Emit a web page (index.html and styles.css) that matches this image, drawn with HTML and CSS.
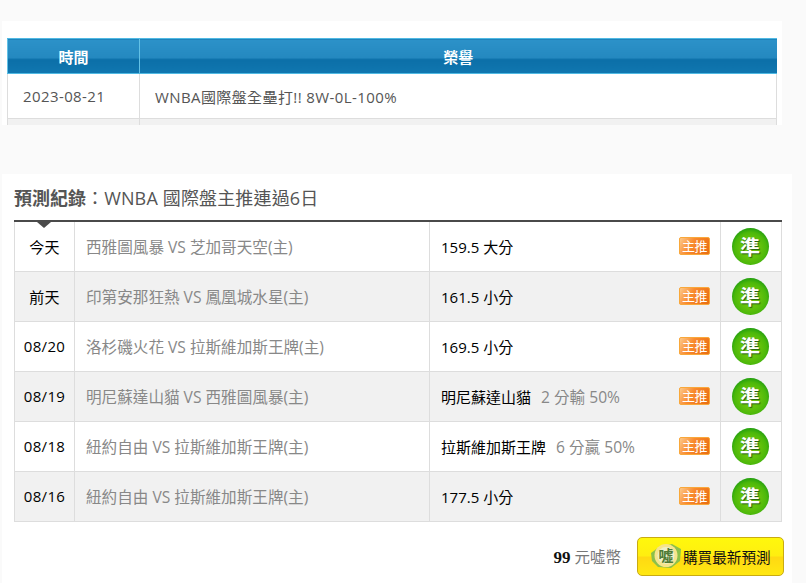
FILE: index.html
```html
<!DOCTYPE html>
<html lang="zh-Hant">
<head>
<meta charset="utf-8">
<title>預測紀錄</title>
<link rel="stylesheet" href="styles.css">
</head>
<body>
<section class="honor-card">
  <table class="honor-table">
    <thead>
      <tr><th class="honor-date">時間</th><th>榮譽</th></tr>
    </thead>
    <tbody>
      <tr><td>2023-08-21</td><td class="honor-text">WNBA國際盤全壘打!! 8W-0L-100%</td></tr>
      <tr class="alt"><td></td><td></td></tr>
    </tbody>
  </table>
</section>
<section class="record-card">
  <h2 class="record-title"><b>預測紀錄</b>：WNBA 國際盤主推連過6日</h2>
  <table class="record-table">
    <tbody>
      <tr><td class="c-day first">今天</td><td class="c-game">西雅圖風暴 VS 芝加哥天空(主)</td><td class="c-pick"><div class="pick-row"><span class="pick"><b>159.5 大分</b></span><span class="tag">主推</span></div></td><td class="c-res"><span class="hit">準</span></td></tr>
      <tr class="alt"><td class="c-day">前天</td><td class="c-game">印第安那狂熱 VS 鳳凰城水星(主)</td><td class="c-pick"><div class="pick-row"><span class="pick"><b>161.5 小分</b></span><span class="tag">主推</span></div></td><td class="c-res"><span class="hit">準</span></td></tr>
      <tr><td class="c-day">08/20</td><td class="c-game">洛杉磯火花 VS 拉斯維加斯王牌(主)</td><td class="c-pick"><div class="pick-row"><span class="pick"><b>169.5 小分</b></span><span class="tag">主推</span></div></td><td class="c-res"><span class="hit">準</span></td></tr>
      <tr class="alt"><td class="c-day">08/19</td><td class="c-game">明尼蘇達山貓 VS 西雅圖風暴(主)</td><td class="c-pick"><div class="pick-row"><span class="pick"><b>明尼蘇達山貓</b><i>2 分輸 50%</i></span><span class="tag">主推</span></div></td><td class="c-res"><span class="hit">準</span></td></tr>
      <tr><td class="c-day">08/18</td><td class="c-game">紐約自由 VS 拉斯維加斯王牌(主)</td><td class="c-pick"><div class="pick-row"><span class="pick"><b>拉斯維加斯王牌</b><i>6 分贏 50%</i></span><span class="tag">主推</span></div></td><td class="c-res"><span class="hit">準</span></td></tr>
      <tr class="alt"><td class="c-day">08/16</td><td class="c-game">紐約自由 VS 拉斯維加斯王牌(主)</td><td class="c-pick"><div class="pick-row"><span class="pick"><b>177.5 小分</b></span><span class="tag">主推</span></div></td><td class="c-res"><span class="hit">準</span></td></tr>
    </tbody>
  </table>
  <div class="buy-row">
    <span class="price"><b>99</b> 元噓幣</span>
    <button class="buy-btn" type="button">
      <svg class="buy-icon" width="32" height="26" viewBox="0 0 32 26" aria-hidden="true">
        <path d="M1 10 L9 4 L22 1 L31 6 L30 18 L21 25 L8 24 L2 18 Z" fill="#8cc04a"/>
        <circle cx="16" cy="12.5" r="11.5" fill="#f6e48c"/>
        <circle cx="16" cy="12.5" r="8.5" fill="#eef0c8"/>
        <text class="buy-icon-text" x="16" y="18" text-anchor="middle">噓</text>
      </svg>
      <span>購買最新預測</span>
    </button>
  </div>
</section>
</body>
</html>
```
FILE: styles.css
```css
* { box-sizing: border-box; }
html, body { margin: 0; padding: 0; }
body {
  width: 806px;
  height: 583px;
  overflow: hidden;
  background: #fafafa;
  font-family: "Open Sans", "Noto Sans CJK TC", sans-serif;
  color: #555;
}
table { border-collapse: collapse; table-layout: fixed; }

.honor-card {
  width: 780px;
  height: 104px;
  margin: 21px 0 0 2px;
  padding: 17px 0 0 5px;
  background: #fff;
  overflow: hidden;
}
.honor-table { width: 770px; }
.honor-table th {
  height: 35px;
  padding: 0;
  font-size: 15px;
  font-weight: 700;
  color: #fff;
  border-top: 1px solid #4fb9e3;
  border-bottom: 1px solid #4fb9e3;
  border-left: 1px solid #62c1e6;
  background: linear-gradient(#2c92c9 0%, #2488bf 55%, #0b6fa8 58%, #1177b0 100%);
}
.honor-table .honor-date { width: 132px; }
.honor-table td {
  height: 45px;
  padding: 0 0 0 15px;
  font-size: 15px;
  letter-spacing: 0.4px;
  color: #555;
  border: 1px solid #ddd;
}
.honor-table .alt td { background: #f1f1f1; height: 45px; }

.record-card {
  width: 790px;
  height: 409px;
  margin: 49px 0 0 2px;
  padding: 0 10px 0 12px;
  background: #fff;
}
.record-title {
  margin: 0;
  height: 46px;
  padding-top: 11px;
  font-size: 18px;
  line-height: 26px;
  font-weight: 400;
  letter-spacing: 0.15px;
  color: #555;
}
.record-title b { font-weight: 700; letter-spacing: 0; }
.record-table {
  width: 768px;
  border-top: 2px solid #4a4a4a;
}
.record-table td {
  height: 50px;
  padding: 0;
  border: 1px solid #ddd;
  font-size: 15px;
}
.record-table tr:first-child td { border-top: 0; }
.record-table .alt td { background: #f1f1f1; }
.c-day { width: 60px; text-align: center; color: #000; letter-spacing: 0.3px; }
.record-table td.first { position: relative; }
.first::before {
  content: "";
  position: absolute;
  left: 22px;
  top: 0;
  border: 7px solid transparent;
  border-top: 6px solid #4a4a4a;
  border-bottom: 0;
}
.record-table td.c-game { width: 355px; padding-left: 11px; font-size: 15.6px; color: #888; }
.record-table td.c-pick { width: 291px; padding: 0 10px 0 11px; }
.pick-row { display: flex; justify-content: space-between; align-items: center; }
.pick b { font-weight: 400; color: #000; }
.pick i { font-style: normal; font-size: 15.6px; margin-left: 10px; color: #888; }
.tag {
  width: 31px;
  height: 18px;
  margin-top: -1px;
  border: 1px solid #f9a83a;
  border-radius: 2px;
  background: linear-gradient(120deg, #fdc98a 0%, #f98a2e 40%, #e96c12 100%);
  color: #fff;
  font-size: 13px;
  line-height: 15px;
  text-align: center;
  white-space: nowrap;
  font-family: "Noto Sans CJK TC", sans-serif;
  letter-spacing: -0.5px;
}
.c-res { text-align: center; padding-right: 2px !important; }
.hit {
  display: inline-flex;
  align-items: center;
  justify-content: center;
  width: 37px;
  height: 37px;
  vertical-align: middle;
  border-radius: 50%;
  background: radial-gradient(circle at 50% 55%, #8ad40e 0%, #4cb80a 58%, #0e9212 82%, #078a16 100%);
  color: #fff;
  font-size: 20px;
  font-weight: 700;
  text-shadow: 1px 1px 1px #1d5a10;
  font-family: "Noto Sans CJK TC", sans-serif;
}

.buy-row {
  display: flex;
  justify-content: flex-end;
  align-items: center;
  gap: 16px;
  margin-top: 15px;
  width: 770px;
}
.price { font-size: 15.5px; color: #777; }
.price b { color: #111; font-family: "Liberation Serif", serif; font-size: 17px; }
.buy-btn {
  display: flex;
  align-items: center;
  gap: 1px;
  width: 147px;
  height: 39px;
  padding: 0 0 0 12px;
  border: 1px solid #c9ab12;
  border-radius: 5px;
  background: linear-gradient(#fff80c 0%, #ffee10 48%, #ffd912 52%, #ffe812 100%);
  color: #111;
  font-family: "Noto Sans CJK TC", sans-serif;
  font-size: 14.6px;
  white-space: nowrap;
}
.buy-icon { flex: none; }
.buy-icon-text { font-size: 15px; font-weight: 700; fill: #4f7a35; }
```
